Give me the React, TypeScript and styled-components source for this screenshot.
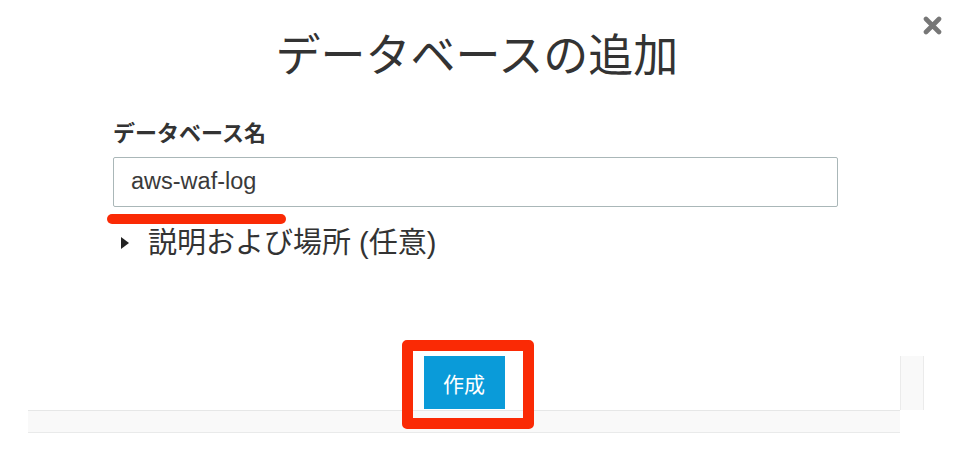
import styled, { createGlobalStyle } from "styled-components";

const GlobalStyle = createGlobalStyle`
  html, body {
    margin: 0;
    padding: 0;
    background: #fff;
  }
  body {
    font-family: "Liberation Sans", "Noto Sans CJK JP", sans-serif;
    color: #333;
  }
`;

const Page = styled.div`
  width: 960px;
  height: 453px;
  overflow: hidden;
  display: flex;
  flex-direction: column;
`;

const Header = styled.header`
  position: relative;
  padding-top: 21px;
  display: flex;
  justify-content: center;
  padding-right: 6px;
`;

const Title = styled.h1`
  margin: 0;
  font-family: "Noto Sans CJK JP", sans-serif;
  font-weight: 400;
  font-size: 45px;
  line-height: 63px;
  color: #333;
`;

const CloseButton = styled.button`
  position: absolute;
  top: 16px;
  right: 17px;
  width: 21px;
  height: 19px;
  padding: 0;
  border: none;
  background: none;
  cursor: pointer;
  display: flex;
`;

const Form = styled.section`
  display: flex;
  flex-direction: column;
  padding-left: 113px;
  width: 725px;
`;

const Label = styled.label`
  margin-top: 32px;
  font-family: "Noto Sans CJK JP", sans-serif;
  font-weight: 700;
  font-size: 22px;
  line-height: 30px;
  color: #333;
`;

const Field = styled.div`
  position: relative;
  margin-top: 11px;
`;

const Input = styled.input`
  box-sizing: border-box;
  width: 100%;
  height: 50px;
  border: 1px solid #aab7b8;
  border-radius: 2px;
  padding: 0 0 2px 17px;
  font-family: "Liberation Sans", sans-serif;
  font-size: 23.5px;
  color: #3a3a3a;
  outline: none;
  background: #fff;
`;

const Underline = styled.span`
  position: absolute;
  top: 57px;
  left: -6px;
  width: 179px;
  height: 10px;
  border-radius: 5px;
  background: #fa2a05;
`;

const Disclosure = styled.div`
  margin-top: 18px;
  padding-left: 8px;
  display: flex;
  align-items: center;
  height: 36px;
  cursor: pointer;
`;

const Caret = styled.span`
  width: 0;
  height: 0;
  border-top: 6px solid transparent;
  border-bottom: 6px solid transparent;
  border-left: 8px solid #222;
  margin-right: 19px;
`;

const DisclosureText = styled.span`
  font-family: "Liberation Sans", "Noto Sans CJK JP", sans-serif;
  font-size: 29px;
  line-height: 36px;
  color: #333;
`;

const Footer = styled.footer`
  margin-top: 79px;
  padding-left: 28px;
  display: flex;
  align-items: flex-start;
`;

const FooterMain = styled.div`
  width: 872px;
  display: flex;
  flex-direction: column;
`;

const ButtonRow = styled.div`
  height: 70px;
  display: flex;
  justify-content: center;
  align-items: flex-start;
`;

const ButtonWrap = styled.div`
  position: relative;
  margin-top: 16px;
`;

const PrimaryButton = styled.button`
  width: 81px;
  height: 53px;
  border: none;
  background: #0a9bd9;
  color: #fff;
  font-family: "Noto Sans CJK JP", sans-serif;
  font-size: 21px;
  cursor: pointer;
`;

const Highlight = styled.span`
  position: absolute;
  top: -16px;
  left: -22px;
  width: 132px;
  height: 89px;
  box-sizing: border-box;
  border: 11px solid #fa2a05;
  border-radius: 5px;
  pointer-events: none;
`;

const Strip = styled.div`
  height: 21px;
  background: #f9f9f9;
  border-top: 1px solid #e6e7e7;
  border-bottom: 1px solid #e9eaea;
`;

const SideStrip = styled.div`
  margin-top: 16px;
  width: 22px;
  height: 54px;
  background: #f9f9f9;
  border-left: 1px solid #ebebeb;
  border-right: 1px solid #ebebeb;
`;

export default function App() {
  return (
    <>
      <GlobalStyle />
      <Page>
        <Header>
          <Title>データベースの追加</Title>
          <CloseButton aria-label="close">
            <svg width="21" height="19" viewBox="0 0 21 19">
              <path
                d="M4 3 L17 16 M17 3 L4 16"
                stroke="#777"
                strokeWidth="4.6"
                strokeLinecap="round"
              />
            </svg>
          </CloseButton>
        </Header>
        <Form>
          <Label>データベース名</Label>
          <Field>
            <Input defaultValue="aws-waf-log" />
            <Underline />
          </Field>
          <Disclosure>
            <Caret />
            <DisclosureText>説明および場所 (任意)</DisclosureText>
          </Disclosure>
        </Form>
        <Footer>
          <FooterMain>
            <ButtonRow>
              <ButtonWrap>
                <PrimaryButton>作成</PrimaryButton>
                <Highlight />
              </ButtonWrap>
            </ButtonRow>
            <Strip />
          </FooterMain>
          <SideStrip />
        </Footer>
      </Page>
    </>
  );
}
